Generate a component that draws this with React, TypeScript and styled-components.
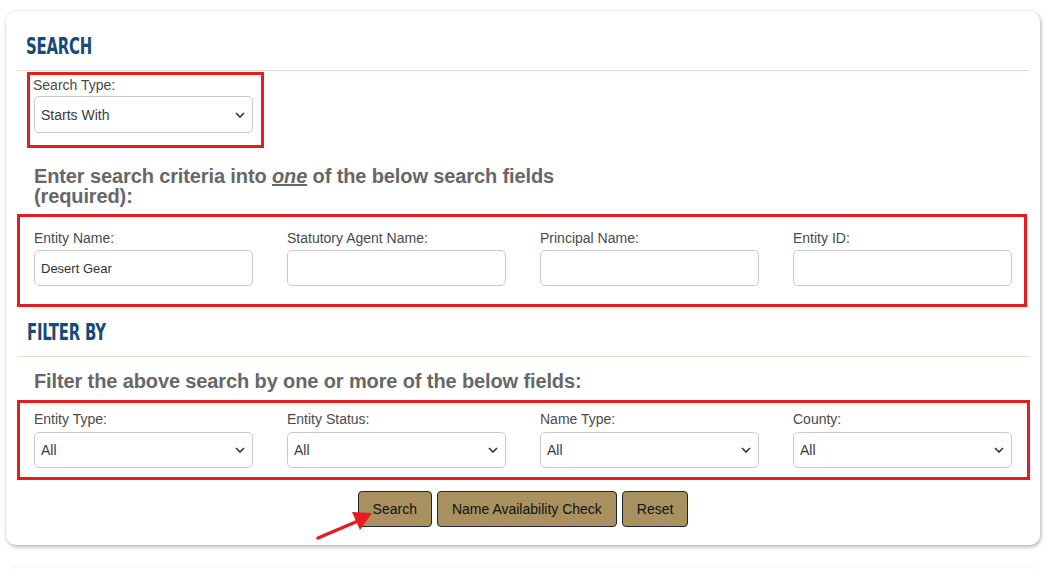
import styled, { createGlobalStyle } from 'styled-components';

const GlobalStyle = createGlobalStyle`
  html, body {
    margin: 0;
    padding: 0;
    background: #ffffff;
    font-family: "Liberation Sans", Arial, sans-serif;
  }
`;

const chevron =
  "url(\"data:image/svg+xml,%3Csvg xmlns='http://www.w3.org/2000/svg' width='10' height='6' viewBox='0 0 10 6'%3E%3Cpath d='M1 1l4 4 4-4' fill='none' stroke='%23333' stroke-width='1.6'/%3E%3C/svg%3E\")";

const Page = styled.div`
  position: relative;
  padding: 11px 9px 0 6px;
  height: 570px;
  box-sizing: border-box;
  overflow: hidden;
`;

const Card = styled.div`
  width: 1034px;
  height: 534px;
  box-sizing: border-box;
  background: #fff;
  border-radius: 10px;
  box-shadow: 1px 2px 4px rgba(0, 0, 0, 0.28), 0 0 2px rgba(0, 0, 0, 0.08);
  padding: 0 11px;
`;

const NextCard = styled.div`
  width: 1034px;
  height: 40px;
  margin-top: 22px;
  border-radius: 10px;
  background: #fff;
  box-shadow: 0 0 2px rgba(0, 0, 0, 0.12);
`;

const SectionHeader = styled.div<{ $height: number; $top: number; $indent: number }>`
  height: ${(p) => p.$height}px;
  box-sizing: border-box;
  padding: ${(p) => p.$top}px 0 0 ${(p) => p.$indent}px;
  border-bottom: 1px solid #e4dfc5;
`;

// no condensed bold face is installed, so the condensed heading face is narrowed by hand
const Heading = styled.h2`
  display: inline-block;
  margin: 0;
  font-family: "DejaVu Sans Condensed", "Liberation Sans", sans-serif;
  font-weight: 700;
  font-size: 23px;
  line-height: 24px;
  letter-spacing: -0.3px;
  color: #17497b;
  transform: scaleX(0.72);
  transform-origin: left center;
`;

const Outline = styled.div<{ $width: number; $height: number; $pad: string; $ml?: number }>`
  width: ${(p) => p.$width}px;
  height: ${(p) => p.$height}px;
  margin-left: ${(p) => p.$ml ?? 0}px;
  box-sizing: border-box;
  border: 3px solid #e51d1f;
  padding: ${(p) => p.$pad};
`;

const Label = styled.label`
  display: block;
  font-size: 14px;
  line-height: 18px;
  color: #4a4a4a;
`;

const Select = styled.select<{ $height?: number; $shift?: number }>`
  display: block;
  width: 219px;
  height: ${(p) => p.$height ?? 36}px;
  margin-left: ${(p) => p.$shift ?? 0}px;
  box-sizing: border-box;
  border: 1px solid #c9c9c9;
  border-radius: 5px;
  background: #fff ${chevron} no-repeat right 7px center;
  appearance: none;
  padding: 0 24px 0 6px;
  font-family: "Liberation Sans", Arial, sans-serif;
  font-size: 14px;
  color: #3a3a3a;
`;

const Input = styled.input`
  display: block;
  width: 219px;
  height: 36px;
  box-sizing: border-box;
  border: 1px solid #c9c9c9;
  border-radius: 5px;
  padding: 0 6px;
  font-family: "Liberation Sans", Arial, sans-serif;
  font-size: 13px;
  color: #333;
`;

const Field = styled.div<{ $gap: number }>`
  display: flex;
  flex-direction: column;
  gap: ${(p) => p.$gap}px;
`;

const FieldRow = styled.div`
  display: grid;
  grid-template-columns: repeat(4, 219px);
  column-gap: 34px;
`;

const Instruction = styled.p<{ $mt: number; $mb: number; $maxWidth: number }>`
  margin: ${(p) => p.$mt}px 0 ${(p) => p.$mb}px;
  padding-left: 17px;
  max-width: ${(p) => p.$maxWidth}px;
  font-size: 20px;
  line-height: 20px;
  font-weight: 700;
  letter-spacing: -0.12px;
  color: #676767;

  em {
    text-decoration: underline;
  }
`;

const ButtonBar = styled.div`
  display: flex;
  justify-content: center;
  gap: 5px;
  margin-top: 11px;
`;

const Button = styled.button`
  height: 36px;
  padding: 0 14px;
  border: 1px solid #1b2636;
  border-radius: 4px;
  background: #a8915f;
  font-family: "Liberation Sans", Arial, sans-serif;
  font-size: 14px;
  color: #111;
  cursor: pointer;
`;

const Arrow = styled.svg`
  position: absolute;
  left: 314px;
  top: 508px;
`;

const searchFields = ['Entity Name:', 'Statutory Agent Name:', 'Principal Name:', 'Entity ID:'];
const filterFields = ['Entity Type:', 'Entity Status:', 'Name Type:', 'County:'];

const App = () => {
  return (
    <Page>
      <GlobalStyle />
      <Card>
        <SectionHeader $height={60} $top={23} $indent={9}>
          <Heading>SEARCH</Heading>
        </SectionHeader>

        <Outline $width={237} $height={76} $pad="1px 0 0 3px" $ml={10} style={{ marginTop: 1 }}>
          <Field $gap={2}>
            <Label>Search Type:</Label>
            <Select $height={37} $shift={1} defaultValue="starts">
              <option value="starts">Starts With</option>
              <option value="contains">Contains</option>
              <option value="exact">Exact Match</option>
            </Select>
          </Field>
        </Outline>

        <Instruction $mt={18} $mb={8} $maxWidth={545}>
          Enter search criteria into <em>one</em> of the below search fields (required):
        </Instruction>

        <Outline $width={1010} $height={93} $pad="12px 0 0 14px">
          <FieldRow>
            {searchFields.map((name, i) => (
              <Field key={name} $gap={3}>
                <Label>{name}</Label>
                <Input defaultValue={i === 0 ? 'Desert Gear' : ''} />
              </Field>
            ))}
          </FieldRow>
        </Outline>

        <SectionHeader $height={50} $top={13} $indent={10}>
          <Heading>FILTER BY</Heading>
        </SectionHeader>

        <Instruction $mt={14} $mb={9} $maxWidth={700}>
          Filter the above search by one or more of the below fields:
        </Instruction>

        <Outline $width={1013} $height={80} $pad="7px 0 0 14px">
          <FieldRow>
            {filterFields.map((name) => (
              <Field key={name} $gap={4}>
                <Label>{name}</Label>
                <Select defaultValue="all">
                  <option value="all">All</option>
                </Select>
              </Field>
            ))}
          </FieldRow>
        </Outline>

        <ButtonBar>
          <Button>Search</Button>
          <Button>Name Availability Check</Button>
          <Button>Reset</Button>
        </ButtonBar>
      </Card>
      <NextCard />

      <Arrow width="64" height="36" viewBox="0 0 64 36">
        <line x1="4" y1="30" x2="44" y2="13" stroke="#e51d1f" strokeWidth="3.5" strokeLinecap="round" />
        <polygon points="58,5 38,4 46,22" fill="#e51d1f" />
      </Arrow>
    </Page>
  );
};

export default App;
